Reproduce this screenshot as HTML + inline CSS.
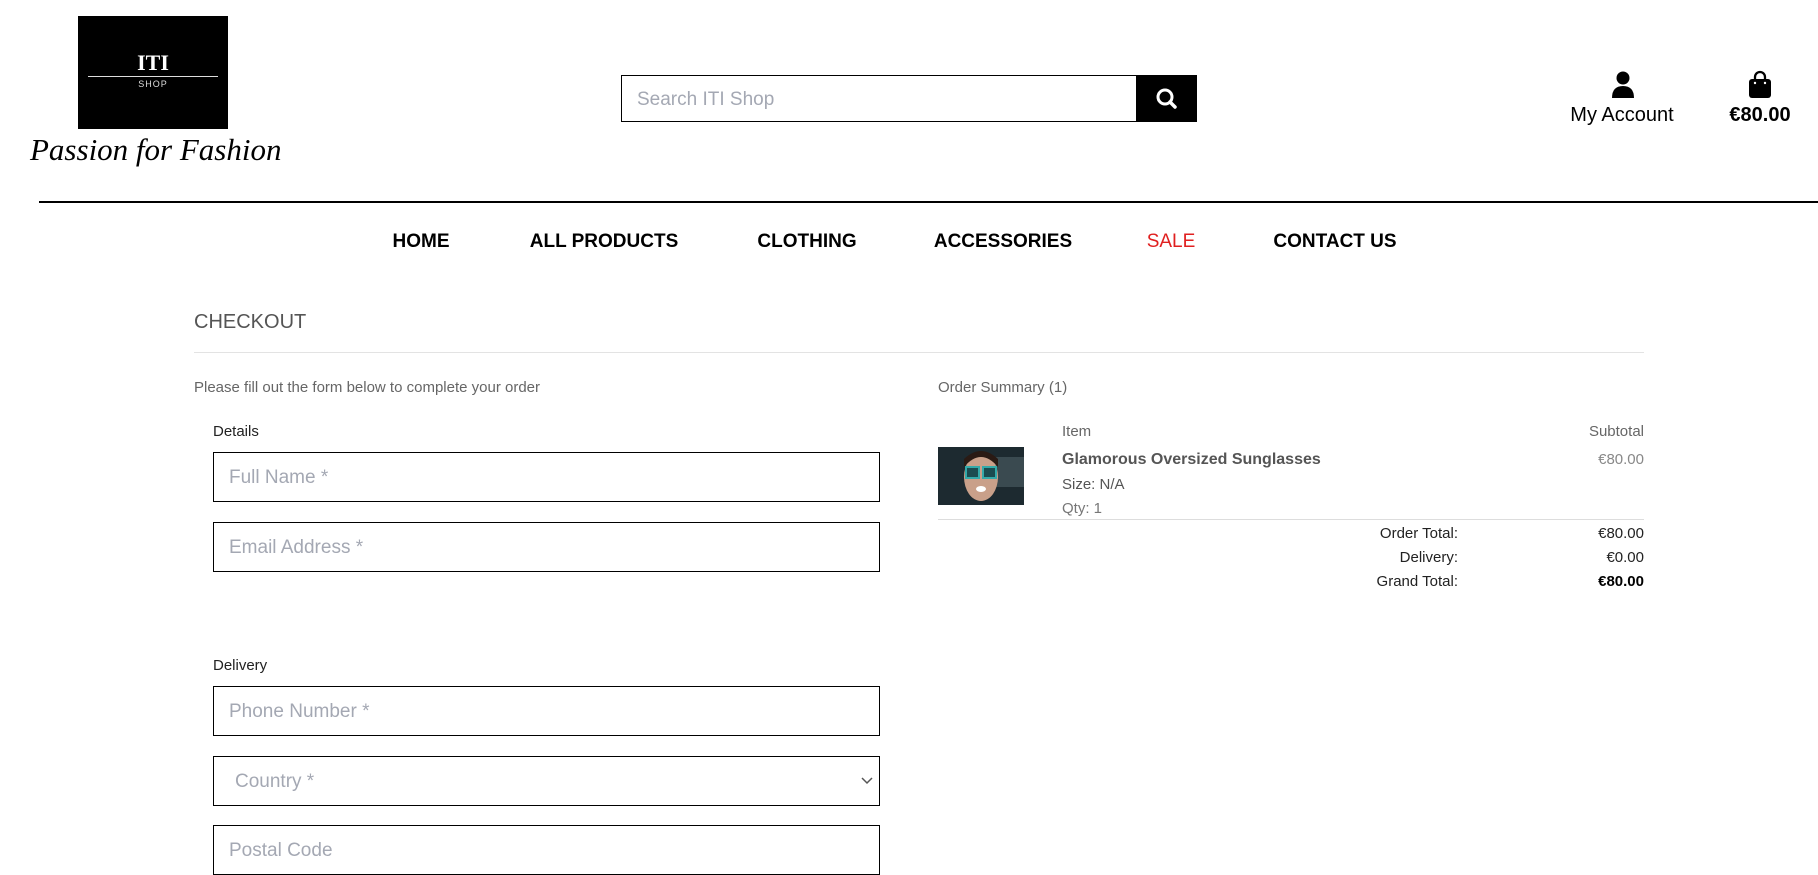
<!DOCTYPE html>
<html><head><meta charset="utf-8"><style>
*{margin:0;padding:0;box-sizing:border-box}
body{width:1818px;height:867px;overflow:hidden;background:#fff;font-family:"Liberation Sans",sans-serif;position:relative;color:#222}
.a{position:absolute;white-space:nowrap}
.logo{left:78px;top:16px;width:150px;height:113px;background:#000;color:#fff;text-align:center}
.nav{top:231px;font-size:19px;font-weight:bold;color:#000;transform:translateX(-50%)}
.inp{position:absolute;left:213px;width:667px;height:50px;border:1px solid #000;font-size:19px;color:#a4a8b3;padding:14px 15px}
.s{font-size:15px;color:#666}
</style></head><body>
<div class="a logo"><div style="position:absolute;top:36px;width:100%;font-family:'Liberation Serif',serif;font-weight:bold;font-size:22px;line-height:22px">ITI</div><div style="position:absolute;left:10px;right:10px;top:60px;border-top:1px solid #ddd"></div><div style="position:absolute;top:63px;width:100%;font-size:9px;letter-spacing:1px;color:#ddd">SHOP</div></div>
<div class="a" style="left:30px;top:132px;font-family:'Liberation Serif',serif;font-style:italic;font-size:31px;color:#000">Passion for Fashion</div>
<div class="a" style="left:621px;top:75px;width:516px;height:47px;border:1px solid #000;font-size:19px;color:#a4a8b3;padding:13px 15px">Search ITI Shop</div>
<div class="a" style="left:1136px;top:75px;width:61px;height:47px;background:#000"><svg width="61" height="47" viewBox="0 0 61 47"><circle cx="29" cy="22" r="7" fill="none" stroke="#fff" stroke-width="3"/><line x1="34" y1="27" x2="39" y2="32" stroke="#fff" stroke-width="3.5" stroke-linecap="round"/></svg></div>
<svg class="a" style="left:1611px;top:71px" width="24" height="27" viewBox="0 0 24 27"><circle cx="12" cy="7" r="6.5" fill="#000"/><path d="M1 27 Q1 15 12 15 Q23 15 23 27Z" fill="#000"/></svg>
<div class="a" style="left:1570px;top:104px;width:104px;text-align:center;font-size:20px;color:#000">My Account</div>
<svg class="a" style="left:1748px;top:70px" width="24" height="28" viewBox="0 0 24 28"><path d="M7 10V7a5 5 0 0 1 10 0v3" fill="none" stroke="#000" stroke-width="2.3"/><rect x="1" y="9" width="22" height="19" rx="3" fill="#000"/><circle cx="7" cy="13" r="1.2" fill="#fff"/><circle cx="17" cy="13" r="1.2" fill="#fff"/></svg>
<div class="a" style="left:1700px;top:104px;width:120px;text-align:center;font-size:20px;font-weight:bold;color:#000">€80.00</div>
<div class="a" style="left:39px;top:201px;width:1779px;height:2px;background:#000"></div>
<div class="a nav" style="left:421px">HOME</div>
<div class="a nav" style="left:604px">ALL PRODUCTS</div>
<div class="a nav" style="left:807px">CLOTHING</div>
<div class="a nav" style="left:1003px">ACCESSORIES</div>
<div class="a nav" style="left:1171px;color:#e02020;font-weight:normal">SALE</div>
<div class="a nav" style="left:1335px">CONTACT US</div>
<div class="a" style="left:194px;top:311px;font-size:20px;color:#555">CHECKOUT</div>
<div class="a" style="left:194px;top:352px;width:1450px;height:1px;background:#e3e3e3"></div>
<div class="a s" style="left:194px;top:379px">Please fill out the form below to complete your order</div>
<div class="a" style="left:213px;top:423px;font-size:15px;color:#222">Details</div>
<div class="inp" style="top:452px">Full Name *</div>
<div class="inp" style="top:522px">Email Address *</div>
<div class="a" style="left:213px;top:657px;font-size:15px;color:#222">Delivery</div>
<div class="inp" style="top:686px">Phone Number *</div>
<div class="inp" style="top:756px;padding-left:21px">Country *<svg style="position:absolute;right:6px;top:20px" width="12" height="8" viewBox="0 0 12 8"><path d="M1 1l5 5 5-5" fill="none" stroke="#555" stroke-width="1.5"/></svg></div>
<div class="inp" style="top:825px">Postal Code</div>
<div class="a s" style="left:938px;top:379px">Order Summary (1)</div>
<div class="a s" style="left:1062px;top:423px">Item</div>
<div class="a s" style="left:1500px;top:423px;width:144px;text-align:right">Subtotal</div>
<svg class="a" style="left:938px;top:447px" width="86" height="58" viewBox="0 0 86 58"><rect width="86" height="58" fill="#1d2a30"/><rect x="55" y="10" width="31" height="30" fill="#3a4a50"/><ellipse cx="43" cy="30" rx="17" ry="24" fill="#c9a08a"/><path d="M26 20 Q43 0 60 20 L60 12 Q43 -4 26 12Z" fill="#2a1a14"/><rect x="28" y="20" width="13" height="11" fill="#1b4c50" stroke="#3aa" stroke-width="2"/><rect x="45" y="20" width="13" height="11" fill="#1b4c50" stroke="#3aa" stroke-width="2"/><ellipse cx="43" cy="42" rx="5" ry="3" fill="#fff"/></svg>
<div class="a" style="left:1062px;top:451px;font-size:16px;font-weight:bold;color:#555">Glamorous Oversized Sunglasses</div>
<div class="a s" style="left:1500px;top:451px;width:144px;text-align:right;color:#888">€80.00</div>
<div class="a s" style="left:1062px;top:476px;color:#555">Size: N/A</div>
<div class="a s" style="left:1062px;top:500px;color:#777">Qty: 1</div>
<div class="a" style="left:938px;top:519px;width:706px;height:1px;background:#ddd"></div>
<div class="a" style="left:1300px;top:525px;width:158px;text-align:right;font-size:15px;color:#222">Order Total:</div>
<div class="a" style="left:1500px;top:525px;width:144px;text-align:right;font-size:15px;color:#222">€80.00</div>
<div class="a" style="left:1300px;top:549px;width:158px;text-align:right;font-size:15px;color:#222">Delivery:</div>
<div class="a" style="left:1500px;top:549px;width:144px;text-align:right;font-size:15px;color:#222">€0.00</div>
<div class="a" style="left:1300px;top:573px;width:158px;text-align:right;font-size:15px;color:#222">Grand Total:</div>
<div class="a" style="left:1500px;top:573px;width:144px;text-align:right;font-size:15px;font-weight:bold;color:#000">€80.00</div>
</body></html>
